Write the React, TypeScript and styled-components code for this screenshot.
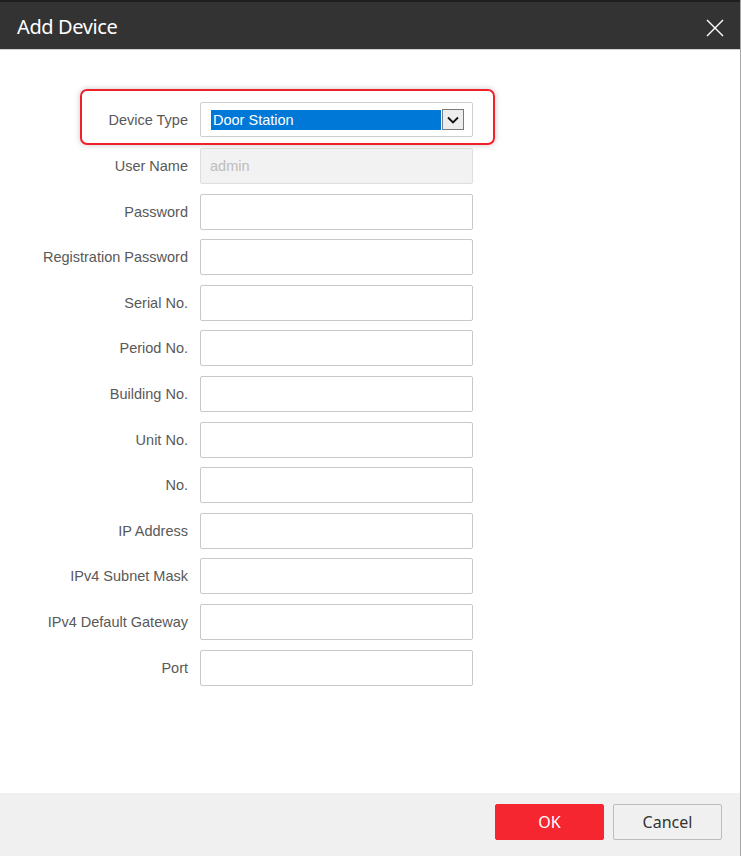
import React from "react";
import styled, { createGlobalStyle } from "styled-components";

const Global = createGlobalStyle`
  html, body { margin: 0; padding: 0; background: #ffffff; }
  body { font-family: "Liberation Sans", Arial, sans-serif; }
  * { box-sizing: border-box; }
`;

const Dialog = styled.div`
  width: 741px;
  height: 856px;
  display: flex;
  flex-direction: column;
  border-right: 1px solid #a6a6a6;
  background: #fff;
`;

const Header = styled.div`
  height: 50px;
  flex: none;
  background: #333333;
  border-top: 2px solid #1f1f1f;
  border-bottom: 1px solid #d0d0d0;
  display: flex;
  align-items: center;
  justify-content: space-between;
  padding: 0 16px 0 17px;
`;

const Title = styled.div`
  color: #ffffff;
  font-family: "Noto Sans", "Open Sans", sans-serif;
  font-size: 20px;
  letter-spacing: -0.4px;
  line-height: 1;
  padding-top: 2px;
`;

const CloseButton = styled.div`
  width: 18px;
  height: 18px;
  display: flex;
  align-items: center;
  justify-content: center;
  margin-top: 4px;
`;

const Body = styled.div`
  flex: 1;
  display: flex;
  flex-direction: column;
  padding-top: 39px;
`;

const Highlight = styled.div`
  margin-left: 80px;
  width: 415px;
  height: 56px;
  border: 2px solid #f0212b;
  border-radius: 7px;
  box-shadow: 0 0 6px rgba(0, 0, 0, 0.22);
  display: flex;
  align-items: flex-start;
  padding-top: 11px;
  margin-bottom: 3px;
`;

const Rows = styled.div`
  display: flex;
  flex-direction: column;
  gap: 9.6px;
`;

const Row = styled.div`
  display: flex;
  align-items: center;
  gap: 12px;
`;

const Label = styled.label<{ $w: number }>`
  width: ${(p) => p.$w}px;
  flex: none;
  text-align: right;
  font-size: 14.5px;
  color: #595959;
  font-family: "Liberation Sans", Arial, sans-serif;
`;

const Input = styled.div<{ $disabled?: boolean }>`
  width: 273px;
  height: 36px;
  border: 1px solid ${(p) => (p.$disabled ? "#dedede" : "#c8c8c8")};
  border-radius: 2px;
  background: ${(p) => (p.$disabled ? "#f2f2f2" : "#ffffff")};
  color: #bcbcbc;
  font-size: 14.5px;
  display: flex;
  align-items: center;
  padding-left: 9px;
`;

const Select = styled.div`
  width: 273px;
  height: 35px;
  border: 1px solid #cfcfcf;
  border-radius: 2px;
  display: flex;
  align-items: center;
  padding-left: 10px;
  gap: 1px;
`;

const SelectedText = styled.div`
  width: 230px;
  height: 20px;
  background: #0078d7;
  color: #ffffff;
  font-size: 14.5px;
  display: flex;
  align-items: center;
  padding-left: 2px;
`;

const Arrow = styled.div`
  width: 22px;
  height: 21px;
  border: 1px solid #7a7a7a;
  background: #ededed;
  display: flex;
  align-items: center;
  justify-content: center;
`;

const Footer = styled.div`
  height: 63px;
  flex: none;
  background: #f0f0f0;
  display: flex;
  align-items: flex-start;
  justify-content: flex-end;
  gap: 9px;
  padding: 11px 18px 0 0;
`;

const Button = styled.button<{ $primary?: boolean }>`
  width: 109px;
  height: 36px;
  border-radius: 2px;
  border: 1px solid ${(p) => (p.$primary ? "#f5262f" : "#bdbdbd")};
  background: ${(p) => (p.$primary ? "#f5262f" : "#f0f0f0")};
  color: ${(p) => (p.$primary ? "#ffffff" : "#333333")};
  font-family: "Noto Sans", "Open Sans", sans-serif;
  font-size: 16px;
  padding: 0;
`;

const fields = [
  "Password",
  "Registration Password",
  "Serial No.",
  "Period No.",
  "Building No.",
  "Unit No.",
  "No.",
  "IP Address",
  "IPv4 Subnet Mask",
  "IPv4 Default Gateway",
  "Port",
];

export default function App() {
  return (
    <Dialog>
      <Global />
      <Header>
        <Title>Add Device</Title>
        <CloseButton>
          <svg width="18" height="18" viewBox="0 0 18 18">
            <path d="M1 1 L17 17 M17 1 L1 17" stroke="#ffffff" strokeWidth="1.4" fill="none" />
          </svg>
        </CloseButton>
      </Header>
      <Body>
        <Highlight>
          <Row>
            <Label $w={106}>Device Type</Label>
            <Select>
              <SelectedText>Door Station</SelectedText>
              <Arrow>
                <svg width="12" height="8" viewBox="0 0 12 8">
                  <path d="M1 1.5 L6 6.5 L11 1.5" stroke="#111" strokeWidth="1.8" fill="none" />
                </svg>
              </Arrow>
            </Select>
          </Row>
        </Highlight>
        <Rows>
          <Row>
            <Label $w={188}>User Name</Label>
            <Input $disabled>admin</Input>
          </Row>
          {fields.map((f) => (
            <Row key={f}>
              <Label $w={188}>{f}</Label>
              <Input />
            </Row>
          ))}
        </Rows>
      </Body>
      <Footer>
        <Button $primary>OK</Button>
        <Button>Cancel</Button>
      </Footer>
    </Dialog>
  );
}
